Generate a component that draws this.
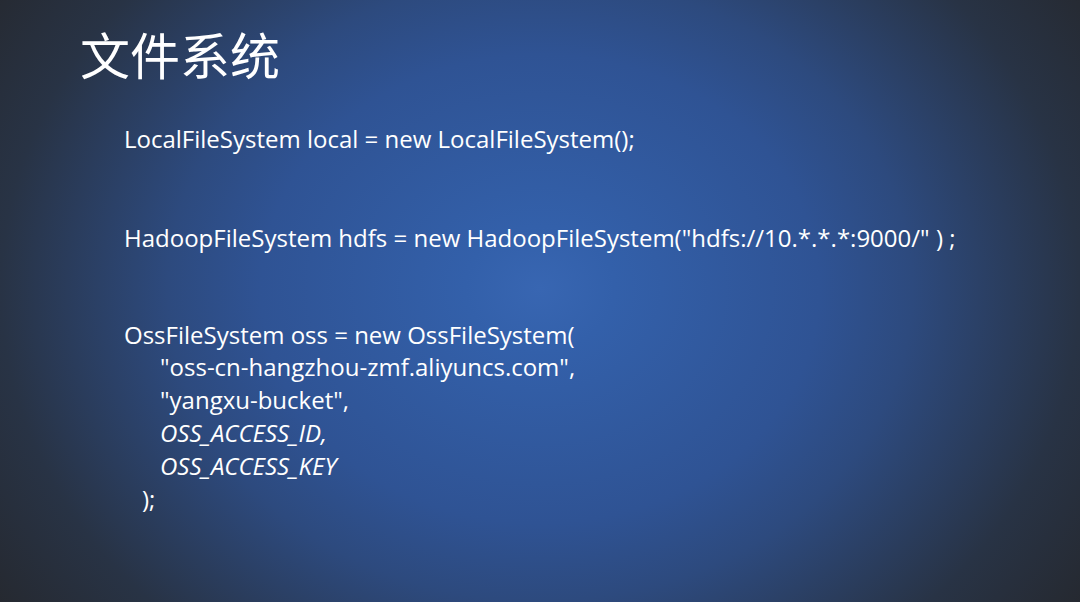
import React from "react";

export default function App() {
  const font = { fontFamily: '"Open Sans", "Noto Sans CJK SC", sans-serif' };
  return (
    <div
      className="w-[1080px] h-[602px] overflow-hidden text-white bg-[radial-gradient(ellipse_620px_520px_at_50%_48%,#3866b2_0%,#3360aa_12%,#2f5394_45%,#2d4a7e_60%,#283345_87%,#25272c_110%)]"
      style={font}
    >
      <h1 className="pl-[80px] pt-[23px] text-[50px] leading-[60px] font-normal" style={{ fontFamily: '"Noto Sans CJK SC", sans-serif' }}>
        文件系统
      </h1>
      <div className="pl-[124px] pt-[39px] text-[24px] leading-[33px]">
        <div>LocalFileSystem local = new LocalFileSystem();</div>
        <div className="mt-[66px]">HadoopFileSystem hdfs = new HadoopFileSystem("hdfs://10.*.*.*:9000/" ) ;</div>
        <div className="mt-[65px] leading-[31px]">OssFileSystem oss = new OssFileSystem(</div>
        <div className="pl-[36px]">"oss-cn-hangzhou-zmf.aliyuncs.com",</div>
        <div className="pl-[36px]">"yangxu-bucket",</div>
        <div className="pl-[36px] italic">OSS_ACCESS_ID,</div>
        <div className="pl-[36px] italic">OSS_ACCESS_KEY</div>
        <div className="pl-[18px]">);</div>
      </div>
    </div>
  );
}
